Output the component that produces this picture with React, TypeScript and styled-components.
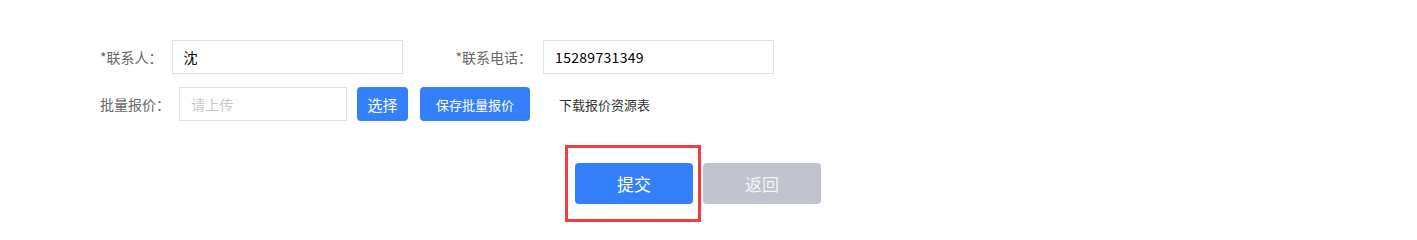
import React from "react";
import styled, { createGlobalStyle } from "styled-components";

const GlobalStyle = createGlobalStyle`
  body {
    margin: 0;
    background: #fff;
    font-family: "Noto Sans CJK SC", "Noto Sans", sans-serif;
  }
`;

const Page = styled.div`
  padding: 40px 0 0 100px;
  height: 237px;
  box-sizing: border-box;
`;

const Row = styled.div`
  display: flex;
  align-items: center;
  height: 34px;
  margin-bottom: 13px;
`;

const Field = styled.div<{ $ml?: number }>`
  display: flex;
  align-items: center;
  margin-left: ${(p) => p.$ml || 0}px;
`;

const Label = styled.span<{ $mr: number }>`
  font-size: 14px;
  color: #666;
  white-space: nowrap;
  margin-right: ${(p) => p.$mr}px;
`;

const Input = styled.input<{ $w: number }>`
  box-sizing: border-box;
  width: ${(p) => p.$w}px;
  height: 34px;
  border: 1px solid #e2e2e2;
  padding: 0 11px;
  font-family: inherit;
  font-size: 14px;
  letter-spacing: 0.3px;
  color: #000;
  outline: none;
  &::placeholder {
    color: #c8c8c8;
  }
`;

const SmallButton = styled.button<{ $w: number; $ml: number; $fs: number }>`
  width: ${(p) => p.$w}px;
  height: 34px;
  margin-left: ${(p) => p.$ml}px;
  border: none;
  border-radius: 4px;
  background: #347ffa;
  color: #fff;
  font-family: inherit;
  font-size: ${(p) => p.$fs}px;
  padding: 0;
  cursor: pointer;
`;

const LinkText = styled.span`
  margin-left: 29px;
  font-size: 13px;
  color: #333;
`;

const Footer = styled.div`
  display: flex;
  gap: 10px;
  margin-top: 42px;
  padding-left: 475px;
`;

const Highlight = styled.div`
  position: relative;
  &::after {
    content: "";
    position: absolute;
    left: -10px;
    right: -8px;
    top: -18px;
    bottom: -18px;
    border: 3px solid #f53b3b;
    pointer-events: none;
  }
`;

const BigButton = styled.button<{ $variant: "primary" | "muted" }>`
  width: 118px;
  height: 41px;
  border: none;
  border-radius: 4px;
  background: ${(p) => (p.$variant === "primary" ? "#347ffa" : "#c1c4cc")};
  color: ${(p) => (p.$variant === "primary" ? "#fff" : "#f3f3f3")};
  font-family: inherit;
  font-size: 17px;
  padding: 0;
  cursor: pointer;
`;

export default function App() {
  return (
    <>
      <GlobalStyle />
      <Page>
        <Row>
          <Field>
            <Label $mr={9}>*联系人：</Label>
            <Input $w={231} defaultValue="沈" />
          </Field>
          <Field $ml={53}>
            <Label $mr={11}>*联系电话：</Label>
            <Input $w={231} defaultValue="15289731349" />
          </Field>
        </Row>
        <Row>
          <Label $mr={9}>批量报价：</Label>
          <Input $w={168} placeholder="请上传" />
          <SmallButton $w={51} $ml={10} $fs={15}>
            选择
          </SmallButton>
          <SmallButton $w={110} $ml={12} $fs={13}>
            保存批量报价
          </SmallButton>
          <LinkText>下载报价资源表</LinkText>
        </Row>
        <Footer>
          <Highlight>
            <BigButton $variant="primary">提交</BigButton>
          </Highlight>
          <BigButton $variant="muted">返回</BigButton>
        </Footer>
      </Page>
    </>
  );
}
